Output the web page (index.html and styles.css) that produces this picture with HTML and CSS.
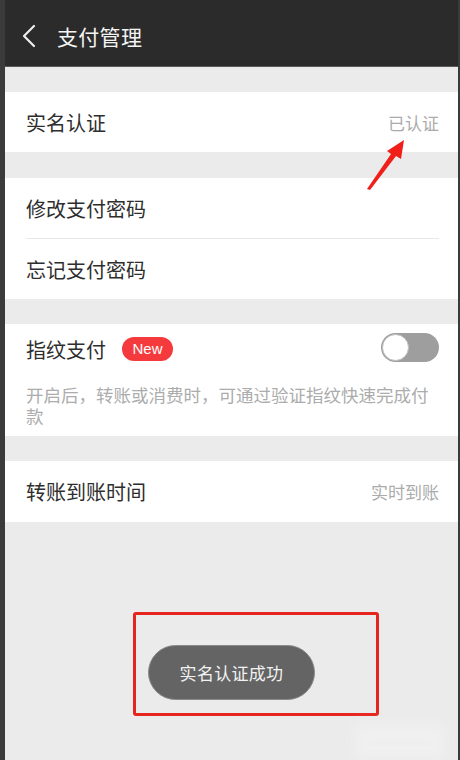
FILE: index.html
```html
<!DOCTYPE html>
<html lang="zh-CN">
<head>
<meta charset="utf-8">
<title>支付管理</title>
<link rel="stylesheet" href="styles.css">
</head>
<body>
<div class="frame">
  <div class="screen">
    <header class="topbar">
      <svg class="back" width="14" height="24" viewBox="0 0 14 24"><path d="M12 2 L2 12 L12 22" fill="none" stroke="#eeeeee" stroke-width="2.2" stroke-linecap="round" stroke-linejoin="round"/></svg>
      <span class="title">支付管理</span>
    </header>

    <section class="group">
      <div class="row"><span class="label">实名认证</span><span class="value">已认证</span></div>
    </section>

    <section class="group">
      <div class="row"><span class="label">修改支付密码</span></div>
      <div class="divider"></div>
      <div class="row"><span class="label">忘记支付密码</span></div>
    </section>

    <section class="group finger">
      <div class="row-top">
        <span class="label">指纹支付</span>
        <span class="badge">New</span>
        <span class="toggle"><span class="knob"></span></span>
      </div>
      <p class="desc">开启后，转账或消费时，可通过验证指纹快速完成付款</p>
    </section>

    <section class="group">
      <div class="row row-last"><span class="label">转账到账时间</span><span class="value">实时到账</span></div>
    </section>

    <div class="toast">实名认证成功</div>
    <div class="mark-box"></div>
    <svg class="arrow" width="50" height="60" viewBox="0 0 50 60">
      <path d="M8 56 L32 21 L28 18 L45 7 L42 26 L37 23 L11 57 Z" fill="#f01f1a"/>
    </svg>
    <div class="smudge"></div>
  </div>
</div>
</body>
</html>
```

FILE: styles.css
```css
html, body {
  margin: 0;
  padding: 0;
}
body {
  width: 460px;
  height: 760px;
  overflow: hidden;
  font-family: "Noto Sans CJK SC", "Noto Sans", sans-serif;
  background: #ebebeb;
}
.frame {
  width: 460px;
  height: 760px;
  box-sizing: border-box;
  border-left: 5px solid #3b3b3b;
  border-right: 2px solid #3a3a3a;
  background: #ebebeb;
}
.screen {
  position: relative;
  height: 100%;
}
.topbar {
  height: 67px;
  box-sizing: border-box;
  background: #2b2b2b;
  border-bottom: 1px solid #5a5a5a;
  display: flex;
  align-items: center;
  padding: 6px 0 0 17px;
  gap: 21px;
}
.back {
  display: block;
}
.title {
  color: #f4f4f4;
  font-size: 21px;
  letter-spacing: 0.3px;
}
.group {
  background: #ffffff;
  margin-top: 25px;
  padding: 0 19px 0 21px;
}
.group:nth-of-type(2) {
  margin-top: 26px;
}
.row {
  height: 60px;
  display: flex;
  align-items: center;
  justify-content: space-between;
}
.row-last {
  height: 61px;
}
.divider {
  height: 1px;
  background: #e8e8e8;
}
.label {
  font-size: 20px;
  color: #2e2e2e;
}
.value {
  font-size: 17px;
  color: #ababab;
}
.finger {
  padding-bottom: 10px;
}
.row-top {
  height: 50px;
  display: flex;
  align-items: center;
}
.badge {
  margin-left: 16px;
  background: #f53a3d;
  color: #ffffff;
  font-family: "Liberation Sans", Arial, sans-serif;
  font-size: 15px;
  height: 24px;
  line-height: 24px;
  width: 51px;
  text-align: center;
  border-radius: 12px;
}
.toggle {
  margin-left: auto;
  margin-top: -4px;
  width: 58px;
  height: 29px;
  border-radius: 15px;
  background: #9e9e9e;
  position: relative;
  box-sizing: border-box;
  padding: 1px;
  display: flex;
  align-items: center;
}
.knob {
  width: 27px;
  height: 27px;
  border-radius: 50%;
  background: #ffffff;
  box-sizing: border-box;
  border: 1px solid #bdbdbd;
}
.desc {
  margin: 10px 0 0 0;
  font-size: 17.5px;
  line-height: 21px;
  color: #acacac;
}
.toast {
  position: absolute;
  left: 143px;
  top: 645px;
  width: 167px;
  height: 55px;
  box-sizing: border-box;
  border-radius: 28px;
  background: #646464;
  border: 1px solid #8a8a8a;
  color: #f2f2f2;
  font-size: 17px;
  display: flex;
  align-items: center;
  justify-content: center;
  letter-spacing: 0.3px;
}
.mark-box {
  position: absolute;
  left: 128px;
  top: 612px;
  width: 246px;
  height: 104px;
  box-sizing: border-box;
  border: 3px solid #e6251e;
  border-radius: 3px;
}
.arrow {
  position: absolute;
  left: 354px;
  top: 133px;
}
.smudge {
  position: absolute;
  left: 350px;
  top: 724px;
  width: 90px;
  height: 36px;
  background: #f3f3f3;
  filter: blur(6px);
  opacity: 0.6;
}
```
